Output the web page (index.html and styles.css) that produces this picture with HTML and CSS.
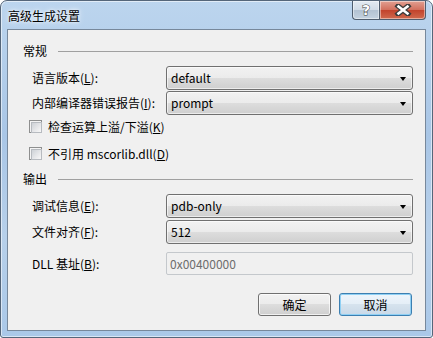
FILE: index.html
```html
<!DOCTYPE html>
<html lang="zh-CN">
<head>
  <meta charset="UTF-8" />
  <meta name="viewport" content="width=device-width, initial-scale=1.0" />
  <title>高级生成设置</title>
  <link rel="stylesheet" href="styles.css">
</head>
<body>
  <div class="window">
    <div class="titlebar">
      <span class="title">高级生成设置</span>
      <div class="caption">
        <span class="cap-btn help">?</span>
        <span class="cap-btn close">
          <svg width="18" height="12" viewBox="0 0 18 12">
            <path d="M4 2 L14 10 M14 2 L4 10" stroke="#3b3b3b" stroke-width="5" stroke-linecap="square" fill="none"/>
            <path d="M4.5 2.5 L13.5 9.5 M13.5 2.5 L4.5 9.5" stroke="#fff" stroke-width="2.6" stroke-linecap="square" fill="none"/>
          </svg>
        </span>
      </div>
    </div>

    <div class="client">
      <div class="group-head"><span>常规</span><i class="rule"></i></div>
      <div class="form">
        <label>语言版本(<u>L</u>):</label>
        <div class="combo">default<i class="arrow"></i></div>
        <label>内部编译器错误报告(<u>I</u>):</label>
        <div class="combo">prompt<i class="arrow"></i></div>
      </div>

      <div class="check-row first"><span class="checkbox"></span><span>检查运算上溢/下溢(<u>K</u>)</span></div>
      <div class="check-row"><span class="checkbox"></span><span>不引用 mscorlib.dll(<u>D</u>)</span></div>

      <div class="group-head out"><span>输出</span><i class="rule"></i></div>
      <div class="form tight">
        <label>调试信息(<u>E</u>):</label>
        <div class="combo">pdb-only<i class="arrow"></i></div>
        <label>文件对齐(<u>F</u>):</label>
        <div class="combo">512<i class="arrow"></i></div>
        <label class="spaced">DLL 基址(<u>B</u>):</label>
        <div class="textbox spaced">0x00400000</div>
      </div>

      <div class="buttons">
        <button class="btn">确定</button>
        <button class="btn focus">取消</button>
      </div>
    </div>
  </div>
</body>
</html>
```

FILE: styles.css
```css
* {
  box-sizing: border-box;
}
body {
  margin: 0;
  width: 433px;
  height: 338px;
  font-family: "Microsoft YaHei", "Noto Sans CJK SC", sans-serif;
  font-size: 12px;
  color: #000;
  background: #fff;
}
.window {
  width: 433px;
  height: 338px;
  border: 1px solid #55667a;
  border-radius: 7px 7px 3px 3px;
  padding: 0 6px 6px;
  background: linear-gradient(to bottom, #bcd5ee 0%, #a9c6e6 40%, #b7d0ea 70%, #aac8e8 100%);
  box-shadow: inset 0 0 0 1px rgba(255,255,255,0.55);
}
.titlebar {
  height: 28px;
  display: flex;
  align-items: flex-start;
}
.title {
  padding: 8px 0 0 1px;
  line-height: 14px;
  text-shadow: 0 0 6px rgba(255,255,255,0.95), 0 0 3px rgba(255,255,255,0.9);
}
.caption {
  margin-left: auto;
  display: flex;
}
.cap-btn {
  height: 19px;
  display: flex;
  align-items: center;
  justify-content: center;
  border: 1px solid #4f5d6e;
  border-top: none;
  box-shadow: inset 0 0 0 1px rgba(255,255,255,0.45);
}
.help {
  width: 27px;
  border-radius: 0 0 0 4px;
  border-right: none;
  background: linear-gradient(to bottom, #e3eaf2 0%, #d2dce7 48%, #b3c2d2 52%, #c4d2e0 100%);
  font-family: "DejaVu Sans", sans-serif;
  font-weight: bold;
  font-size: 14px;
  color: #fff;
  -webkit-text-stroke: 1px #3c3c3c;
  paint-order: stroke fill;
}
.close {
  width: 47px;
  border-radius: 0 0 4px 0;
  background: linear-gradient(to bottom, #e2a092 0%, #d3705e 48%, #c2432c 52%, #d06a4e 100%);
}
.client {
  height: 302px;
  border: 1px solid #77889b;
  background: #f0f0f0;
  display: flex;
  flex-direction: column;
}
.group-head {
  margin: 13px 12px 0 15px;
  height: 16px;
  display: flex;
  align-items: center;
  gap: 11px;
  line-height: 16px;
}
.group-head.out {
  margin-top: 11px;
}
.rule {
  flex: 1;
  border-top: 1px solid #a0a0a0;
}
.form {
  margin: 7px 0 0 24px;
  display: grid;
  grid-template-columns: 134px 247px;
  row-gap: 1px;
}
.form.tight {
  row-gap: 2px;
}
.form label {
  align-self: center;
  line-height: 16px;
}
.combo {
  position: relative;
  height: 24px;
  padding-left: 4px;
  line-height: 22px;
  border: 1px solid #707070;
  border-radius: 3px;
  background: linear-gradient(to bottom, #f2f2f2 0%, #ebebeb 50%, #dddddd 50%, #cfcfcf 100%);
  box-shadow: inset 0 0 0 1px rgba(255,255,255,0.6);
}
.arrow {
  position: absolute;
  right: 6px;
  top: 10px;
  border-left: 3.5px solid transparent;
  border-right: 3.5px solid transparent;
  border-top: 4px solid #000;
}
.textbox {
  height: 23px;
  padding-left: 3px;
  line-height: 21px;
  border: 1px solid #c4c8cc;
  border-radius: 2px;
  background: #f0f0f0;
  color: #6d6d6d;
}
.spaced {
  margin-top: 6px;
}
.check-row {
  margin: 14px 0 0 21px;
  height: 13px;
  display: flex;
  align-items: center;
  gap: 6px;
  line-height: 16px;
}
.check-row.first {
  margin-top: 5px;
}
.checkbox {
  width: 13px;
  height: 13px;
  border: 1px solid #8e8f8f;
  background: #f4f4f4;
  padding: 1px;
}
.checkbox::before {
  content: "";
  display: block;
  width: 9px;
  height: 9px;
  border: 1px solid #b7bbc0;
  background: linear-gradient(135deg, #cdd1d6 0%, #e8e9eb 60%, #f8f8f8 100%);
}
.buttons {
  margin: 18px 13px 0 0;
  display: flex;
  justify-content: flex-end;
  gap: 8px;
}
.btn {
  width: 73px;
  height: 23px;
  padding: 0;
  font: inherit;
  color: #000;
  border: 1px solid #707070;
  border-radius: 3px;
  background: linear-gradient(to bottom, #f2f2f2 0%, #ebebeb 50%, #dddddd 50%, #cfcfcf 100%);
  box-shadow: inset 0 0 0 1px rgba(255,255,255,0.7);
}
.btn.focus {
  border-color: #3c7fb1;
  box-shadow: inset 0 0 0 1px #8fd0f4;
  background: linear-gradient(to bottom, #eef5fb 0%, #e4eef7 50%, #d6e3ee 50%, #c9d9e8 100%);
}
```
